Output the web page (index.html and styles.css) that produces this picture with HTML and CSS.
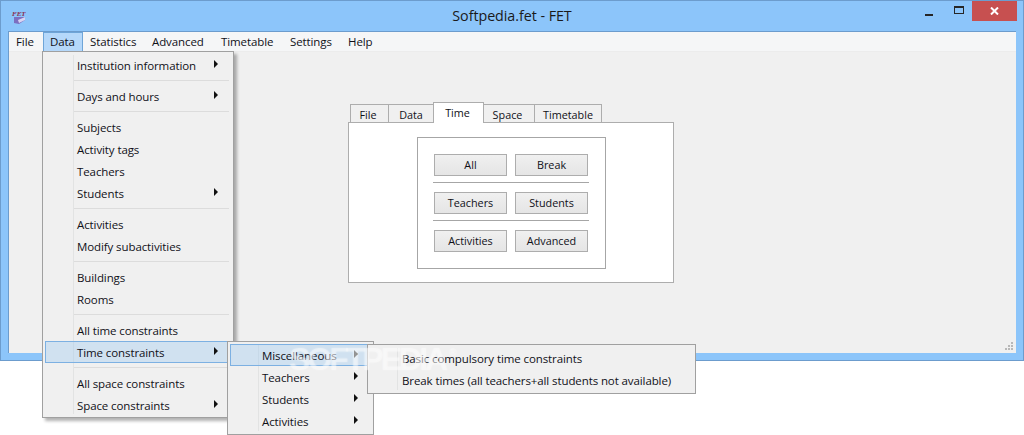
FILE: index.html
```html
<!DOCTYPE html>
<html lang="en">
<head>
<meta charset="utf-8">
<title>Softpedia.fet - FET</title>
<link rel="stylesheet" href="styles.css">
</head>
<body>
<div class="window">
  <header class="titlebar">
    <svg class="appicon" width="16" height="16" viewBox="0 0 16 16">
      <polygon points="3,9 14,9 14,12 8,16 3,15" fill="#7c6fc0"/>
      <polygon points="7,12 14,9 14,12 8,15" fill="#d8d4f2"/>
      <text x="1" y="8" class="appicon-text">FET</text>
    </svg>
    <div class="title">Softpedia.fet - FET</div>
    <div class="controls">
      <span class="ctl"><i class="min"></i></span>
      <span class="ctl"><i class="max"></i></span>
      <span class="ctl close"><svg width="9" height="8" viewBox="0 0 9 8"><path d="M1 0.5 L8 7.5 M8 0.5 L1 7.5" stroke="#fff" stroke-width="2"/></svg></span>
    </div>
  </header>
  <div class="client">
    <nav class="menubar">
      <span class="mb">File</span>
      <span class="mb on">Data</span>
      <span class="mb">Statistics</span>
      <span class="mb">Advanced</span>
      <span class="mb">Timetable</span>
      <span class="mb">Settings</span>
      <span class="mb">Help</span>
    </nav>
    <main class="central">
      <div class="tabwidget">
        <div class="tabs">
          <span class="tab t1">File</span>
          <span class="tab t2">Data</span>
          <span class="tab t3 sel">Time</span>
          <span class="tab t4">Space</span>
          <span class="tab t5">Timetable</span>
        </div>
        <div class="pane">
          <div class="frame">
            <div class="row"><button class="btn">All</button><button class="btn">Break</button></div>
            <hr class="rule">
            <div class="row"><button class="btn">Teachers</button><button class="btn">Students</button></div>
            <hr class="rule">
            <div class="row"><button class="btn">Activities</button><button class="btn">Advanced</button></div>
          </div>
        </div>
      </div>
    </main>
    <div class="grip"><svg width="10" height="10" viewBox="0 0 10 10"><path fill="#b8b8b8" d="M7 0h2v2H7zM4 3h2v2H4zM7 3h2v2H7zM1 6h2v2H1zM4 6h2v2H4zM7 6h2v2H7z"/></svg></div>
  </div>
</div>

<div class="popup data-menu">
  <div class="item"><span>Institution information</span><b class="arrow"></b></div>
  <div class="sep"></div>
  <div class="item"><span>Days and hours</span><b class="arrow"></b></div>
  <div class="sep"></div>
  <div class="item"><span>Subjects</span></div>
  <div class="item"><span>Activity tags</span></div>
  <div class="item"><span>Teachers</span></div>
  <div class="item"><span>Students</span><b class="arrow"></b></div>
  <div class="sep"></div>
  <div class="item"><span>Activities</span></div>
  <div class="item"><span>Modify subactivities</span></div>
  <div class="sep"></div>
  <div class="item"><span>Buildings</span></div>
  <div class="item"><span>Rooms</span></div>
  <div class="sep"></div>
  <div class="item"><span>All time constraints</span></div>
  <div class="item hot"><span>Time constraints</span><b class="arrow"></b></div>
  <div class="sep"></div>
  <div class="item"><span>All space constraints</span></div>
  <div class="item"><span>Space constraints</span><b class="arrow"></b></div>
</div>

<div class="popup time-menu">
  <div class="item hot"><span>Miscellaneous</span><b class="arrow"></b></div>
  <div class="item"><span>Teachers</span><b class="arrow"></b></div>
  <div class="item"><span>Students</span><b class="arrow"></b></div>
  <div class="item"><span>Activities</span><b class="arrow"></b></div>
</div>

<div class="popup misc-menu">
  <div class="item"><span>Basic compulsory time constraints</span></div>
  <div class="item"><span>Break times (all teachers+all students not available)</span></div>
</div>

<div class="watermark">SOFTPEDIA<sup class="reg">®</sup></div>
</body>
</html>
```
FILE: styles.css
```css
* { box-sizing: border-box; }
html, body { margin: 0; padding: 0; background: #fff; }
body {
  width: 1024px;
  height: 435px;
  overflow: hidden;
  position: relative;
  font-family: "Open Sans", "Noto Sans", sans-serif;
  font-size: 11.5px;
  letter-spacing: -0.1px;
  color: #101018;
}
.window {
  width: 1024px;
  height: 361px;
  background: #8cc5fa;
  border: 1px solid #6c9ccd;
  display: flex;
  flex-direction: column;
  padding: 0 7px 7px;
}
.titlebar {
  height: 30px;
  flex: none;
  display: flex;
  align-items: flex-start;
  position: relative;
}
.appicon { position: absolute; left: 3px; top: 7px; }
.appicon-text { font: italic bold 7px "Liberation Serif", serif; fill: #8a2c4c; letter-spacing: 0; }
.title {
  flex: 1;
  text-align: center;
  font-size: 14.3px;
  letter-spacing: -0.05px;
  line-height: 29px;
  color: #1a1a1a;
}
.controls { position: absolute; right: -7px; top: 0; display: flex; align-items: flex-start; padding-right: 6px; }
.ctl { width: 30px; height: 20px; display: flex; align-items: center; justify-content: center; }
.ctl.close { width: 45px; background: #c75050; margin-left: 1px; }
.min { display: block; width: 8px; height: 2px; background: #262626; margin-top: 8px; margin-right: -6px; }
.max { display: block; width: 10px; height: 8px; border: 1px solid #262626; border-top-width: 2px; margin-right: -5px; margin-top: -3px; }
.client {
  flex: 1;
  background: #f0f0f0;
  border: 1px solid #6c9ccd;
  border-width: 1px 0 0 1px;
  position: relative;
  display: flex;
  flex-direction: column;
  min-height: 0;
}
.menubar {
  height: 20px;
  background: #f5f6f7;
  border-bottom: 1px solid #ececec;
  display: flex;
  flex: none;
}
.mb {
  line-height: 18px;
  padding: 0 6px;
  border: 1px solid transparent;
  border-bottom: 0;
  height: 20px;
}
.mb:nth-child(1) { width: 34px; }
.mb:nth-child(2) { width: 40px; }
.mb:nth-child(3) { width: 62px; }
.mb:nth-child(4) { width: 69px; }
.mb:nth-child(5) { width: 69px; }
.mb:nth-child(6) { width: 58px; }
.mb.on { background: #b5d8fa; border: 1px solid #6ea5d8; }
.central {
  flex: 1;
  display: flex;
  justify-content: flex-start;
  padding: 50px 0 0 339px;
}
.tabwidget { width: 326px; height: 181px; }
.tabs { height: 20px; display: flex; padding-left: 2px; align-items: flex-end; position: relative; z-index: 1; }
.tab {
  flex: none;
  height: 18px;
  background: #f0f0f0;
  border: 1px solid #adadad;
  border-bottom: 0;
  margin-right: -1px;
  text-align: center;
  line-height: 19px;
  font-size: 10.8px;
  letter-spacing: 0;
}
.t1 { width: 39px; padding-right: 3px; }
.t2 { width: 46px; }
.t3 { width: 51px; padding-right: 2px; }
.t4 { width: 52px; padding-right: 3px; }
.t5 { width: 68px; }
.tab.sel { height: 21px; background: #fff; margin-bottom: -1px; line-height: 20px; position: relative; }
.pane {
  height: 161px;
  background: #fff;
  border: 1px solid #adadad;
  padding: 14px 0 0 68px;
}
.frame {
  width: 189px;
  height: 132px;
  border: 1px solid #a6a6a6;
  padding: 16px 16px 0;
  display: flex;
  flex-direction: column;
}
.row { display: flex; justify-content: space-between; width: 154px; height: 22px; flex: none; }
.btn {
  width: 73px;
  height: 22px;
  padding: 0 0 1px;
  border: 1px solid #adadad;
  background: linear-gradient(#f0f0f0, #e5e5e5);
  font: inherit;
  font-size: 10.8px;
  letter-spacing: 0;
  color: #101018;
}
.rule { border: 0; height: 1px; background: #a6a6a6; margin: 6px -1px 9px; width: 156px; flex: none; }
.grip { position: absolute; right: 2px; bottom: 1px; height: 10px; line-height: 0; }

.popup {
  position: absolute;
  background: #f0f0f0;
  border: 1px solid #a0a0a0;
  padding: 2px;
  box-shadow: 3px 3px 3px rgba(0,0,0,.3);
  background-image: linear-gradient(#e2e3e3, #e2e3e3);
  background-repeat: no-repeat;
  background-size: 1px calc(100% - 6px);
}
.data-menu { left: 42px; top: 51px; width: 192px; height: 367px; background-position: 30px 3px; }
.time-menu { left: 227px; top: 341px; width: 147px; height: 94px; background-position: 30px 3px; box-shadow: none; }
.misc-menu { left: 367px; top: 344px; width: 329px; height: 50px; background-position: 29px 3px; box-shadow: none; }
.item {
  height: 22px;
  line-height: 21px;
  padding-left: 31px;
  border: 1px solid transparent;
  position: relative;
  white-space: nowrap;
}
.item.hot { background: rgba(153,200,240,.36); border-color: #7cb0e2; }
.sep { height: 1px; margin: 4px 2px 4px 29px; background: #dcdcdc; }
.arrow {
  position: absolute;
  right: 12px;
  top: 5px;
  width: 0;
  height: 0;
  border-left: 4px solid #111;
  border-top: 4px solid transparent;
  border-bottom: 4px solid transparent;
}
.watermark {
  position: absolute;
  left: 289px;
  top: 341px;
  font: bold 32px "Liberation Sans", sans-serif;
  letter-spacing: -3px;
  color: rgba(255,255,255,.3);
  text-shadow: 0 0 2px rgba(255,255,255,.4);
  white-space: nowrap;
  pointer-events: none;
}
.reg { font-size: 10px; letter-spacing: 0; vertical-align: 14px; line-height: 0; margin-left: 4px; }
```
